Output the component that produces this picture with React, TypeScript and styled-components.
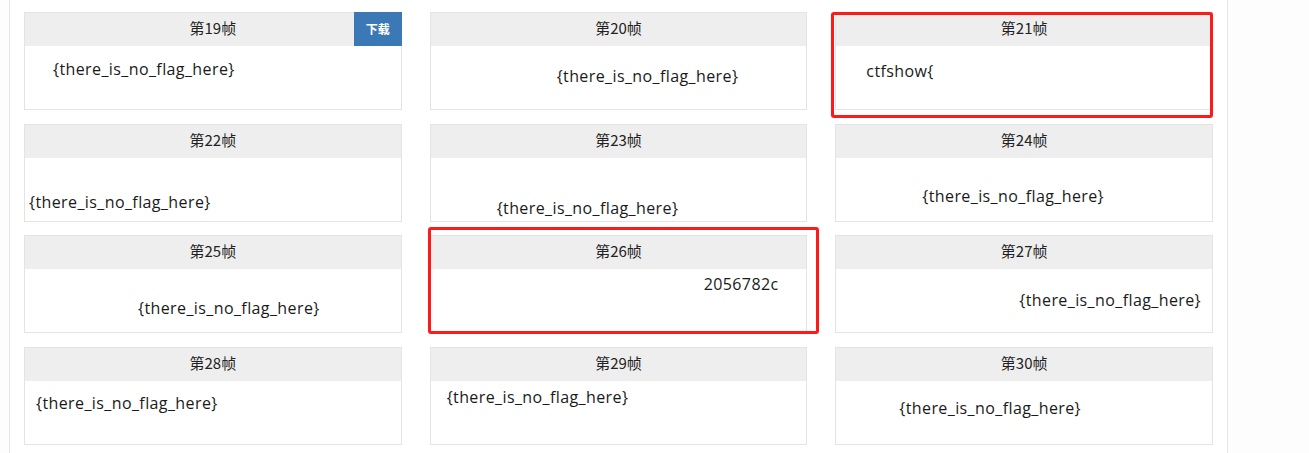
import React from "react";
import styled, { createGlobalStyle } from "styled-components";

const GlobalStyle = createGlobalStyle`
  html, body {
    margin: 0;
    padding: 0;
    background: #fdfdfd;
  }
  body {
    font-family: "Open Sans", "Noto Sans CJK SC", sans-serif;
    color: #222;
  }
`;

const Page = styled.div`
  box-sizing: border-box;
  margin-left: 9px;
  width: 1219px;
  min-height: 453px;
  padding: 12px 14px;
  background: #ffffff;
  border-left: 1px solid #e6e6e6;
  border-right: 1px solid #e6e6e6;
`;

const Grid = styled.div`
  display: grid;
  grid-template-columns: repeat(3, 1fr);
  column-gap: 28px;
  row-gap: 13.67px;
`;

const Frame = styled.div`
  position: relative;
  box-sizing: border-box;
  height: 98px;
  border: 1px solid #e4e4e4;
  background: #ffffff;
  display: flex;
  flex-direction: column;
`;

const Header = styled.div`
  position: relative;
  box-sizing: border-box;
  height: 33px;
  flex: none;
  padding-bottom: 3px;
  background: #eeeeee;
  display: flex;
  align-items: center;
  justify-content: center;
  font-family: "Noto Sans CJK SC", sans-serif;
  font-size: 15px;
  line-height: 20px;
  color: #222;
`;

const Download = styled.button`
  position: absolute;
  top: -1px;
  right: -1px;
  width: 48px;
  height: 34px;
  border: none;
  margin: 0;
  padding: 0 0 2px;
  background: #3b78b6;
  color: #ffffff;
  font-family: "Noto Sans CJK SC", sans-serif;
  font-size: 12px;
  font-weight: 700;
  cursor: pointer;
`;

const Body = styled.div<{ $x: number; $y: number }>`
  flex: 1;
  padding-left: ${(p) => p.$x}px;
  padding-top: ${(p) => p.$y}px;
`;

const FrameText = styled.div`
  font-family: "Open Sans", sans-serif;
  font-size: 16px;
  letter-spacing: 0.4px;
  line-height: 20px;
  color: #1a1a1a;
  white-space: nowrap;
`;

const Highlight = styled.div<{ $t: number; $r: number; $b: number; $l: number }>`
  position: absolute;
  top: ${(p) => p.$t}px;
  right: ${(p) => p.$r}px;
  bottom: ${(p) => p.$b}px;
  left: ${(p) => p.$l}px;
  border: 3px solid #ff1a1a;
  border-radius: 3px;
  pointer-events: none;
`;

type FrameData = {
  n: number;
  text: string;
  x: number;
  cy: number;
  download?: boolean;
  box?: { t: number; r: number; b: number; l: number };
};

const NOFLAG = "{there_is_no_flag_here}";

const frames: FrameData[] = [
  { n: 19, text: NOFLAG, x: 28, cy: 23 },
  { n: 20, text: NOFLAG, x: 126, cy: 30 },
  { n: 21, text: "ctfshow{", x: 30, cy: 25, box: { t: -1, r: -1, b: -9, l: -5 } },
  { n: 22, text: NOFLAG, x: 4, cy: 44 },
  { n: 23, text: NOFLAG, x: 66, cy: 50 },
  { n: 24, text: NOFLAG, x: 86, cy: 38 },
  { n: 25, text: NOFLAG, x: 113, cy: 39 },
  { n: 26, text: "2056782c", x: 273, cy: 15, box: { t: -9, r: -13, b: -2, l: -3 } },
  { n: 27, text: NOFLAG, x: 183, cy: 31 },
  { n: 28, text: NOFLAG, x: 11, cy: 22 },
  { n: 29, text: NOFLAG, x: 16, cy: 16 },
  { n: 30, text: NOFLAG, x: 63, cy: 27 },
].map((f) => (f.n === 19 ? { ...f, download: true } : f));

export default function App() {
  return (
    <>
      <GlobalStyle />
      <Page>
        <Grid>
          {frames.map((f) => (
            <Frame key={f.n}>
              <Header>
                第{f.n}帧
                {f.download && <Download>下载</Download>}
              </Header>
              <Body $x={f.x} $y={f.cy - 10}>
                <FrameText>{f.text}</FrameText>
              </Body>
              {f.box && <Highlight $t={f.box.t} $r={f.box.r} $b={f.box.b} $l={f.box.l} />}
            </Frame>
          ))}
        </Grid>
      </Page>
    </>
  );
}
